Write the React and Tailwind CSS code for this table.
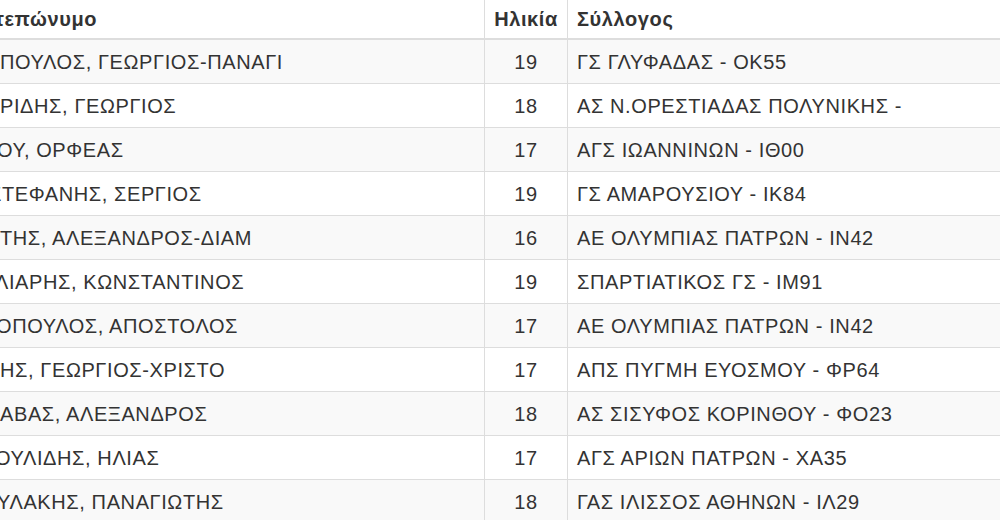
const rows = [
  { name: 'ΠΟΥΛΟΣ, ΓΕΩΡΓΙΟΣ-ΠΑΝΑΓΙ', shift: 'ml-0', age: 19, club: 'ΓΣ ΓΛΥΦΑΔΑΣ - ΟΚ55' },
  { name: 'ΡΙΔΗΣ, ΓΕΩΡΓΙΟΣ', shift: 'ml-0', age: 18, club: 'ΑΣ Ν.ΟΡΕΣΤΙΑΔΑΣ ΠΟΛΥΝΙΚΗΣ -' },
  { name: 'ΟΥ, ΟΡΦΕΑΣ', shift: '-ml-[3px]', age: 17, club: 'ΑΓΣ ΙΩΑΝΝΙΝΩΝ - ΙΘ00' },
  { name: 'ΣΤΕΦΑΝΗΣ, ΣΕΡΓΙΟΣ', shift: '-ml-[11px]', age: 19, club: 'ΓΣ ΑΜΑΡΟΥΣΙΟΥ - ΙΚ84' },
  { name: 'ΤΗΣ, ΑΛΕΞΑΝΔΡΟΣ-ΔΙΑΜ', shift: 'ml-0', age: 16, club: 'ΑΕ ΟΛΥΜΠΙΑΣ ΠΑΤΡΩΝ - ΙΝ42' },
  { name: 'ΛΙΑΡΗΣ, ΚΩΝΣΤΑΝΤΙΝΟΣ', shift: '-ml-[5px]', age: 19, club: 'ΣΠΑΡΤΙΑΤΙΚΟΣ ΓΣ - ΙΜ91' },
  { name: 'ΟΠΟΥΛΟΣ, ΑΠΟΣΤΟΛΟΣ', shift: '-ml-[4px]', age: 17, club: 'ΑΕ ΟΛΥΜΠΙΑΣ ΠΑΤΡΩΝ - ΙΝ42' },
  { name: 'ΗΣ, ΓΕΩΡΓΙΟΣ-ΧΡΙΣΤΟ', shift: 'ml-0', age: 17, club: 'ΑΠΣ ΠΥΓΜΗ ΕΥΟΣΜΟΥ - ΦΡ64' },
  { name: 'ΑΒΑΣ, ΑΛΕΞΑΝΔΡΟΣ', shift: 'ml-0', age: 18, club: 'ΑΣ ΣΙΣΥΦΟΣ ΚΟΡΙΝΘΟΥ - ΦΟ23' },
  { name: 'ΟΥΛΙΔΗΣ, ΗΛΙΑΣ', shift: '-ml-[5px]', age: 17, club: 'ΑΓΣ ΑΡΙΩΝ ΠΑΤΡΩΝ - ΧΑ35' },
  { name: 'ΥΛΑΚΗΣ, ΠΑΝΑΓΙΩΤΗΣ', shift: '-ml-[3px]', age: 18, club: 'ΓΑΣ ΙΛΙΣΣΟΣ ΑΘΗΝΩΝ - ΙΛ29' },
]

export default function App() {
  return (
    <div className="w-[1000px] h-[520px] overflow-hidden bg-white text-[#333] text-[20px] tracking-[0.6px] font-['Liberation_Sans',Arial,sans-serif]">
      <div className="grid grid-cols-[484px_83px_1fr] h-10 border-b-2 border-[#ddd] font-bold">
        <div className="flex items-center overflow-hidden whitespace-nowrap">
          <span className="-ml-[5px]">τεπώνυμο</span>
        </div>
        <div className="flex items-center justify-center border-l border-[#ddd]">Ηλικία</div>
        <div className="flex items-center border-l border-[#ddd] pl-[9px]">Σύλλογος</div>
      </div>
      {rows.map((r, i) => (
        <div
          key={i}
          className={`grid grid-cols-[484px_83px_1fr] h-11 border-b border-[#ddd] ${i % 2 === 0 ? 'bg-[#f9f9f9]' : 'bg-white'}`}
        >
          <div className="flex items-center overflow-hidden whitespace-nowrap">
            <span className={r.shift}>{r.name}</span>
          </div>
          <div className="flex items-center justify-center border-l border-[#ddd]">{r.age}</div>
          <div className="flex items-center border-l border-[#ddd] pl-[9px] whitespace-nowrap">{r.club}</div>
        </div>
      ))}
    </div>
  )
}
